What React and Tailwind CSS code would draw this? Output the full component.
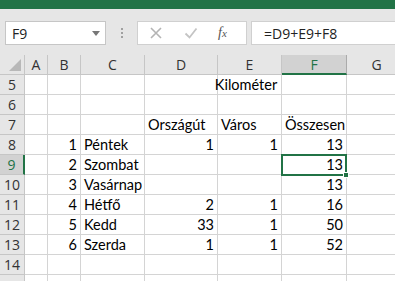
import React from "react";

const cols = [
  { name: "A", w: "w-[23px]" },
  { name: "B", w: "w-[33px]" },
  { name: "C", w: "w-[64px]" },
  { name: "D", w: "w-[73px]" },
  { name: "E", w: "w-[64px]" },
  { name: "F", w: "w-[65px]" },
  { name: "G", w: "w-[60px]" },
];

// each row: [A, B, C, D, E, F, G]; numbers are right aligned
const rows = [
  { n: 5, cells: ["", "", "", "", "", "", ""], title: true },
  { n: 6, cells: ["", "", "", "", "", "", ""] },
  { n: 7, cells: ["", "", "", "Országút", "Város", "Összesen", ""] },
  { n: 8, cells: ["", 1, "Péntek", 1, 1, 13, ""] },
  { n: 9, cells: ["", 2, "Szombat", "", "", 13, ""] },
  { n: 10, cells: ["", 3, "Vasárnap", "", "", 13, ""] },
  { n: 11, cells: ["", 4, "Hétfő", 2, 1, 16, ""] },
  { n: 12, cells: ["", 5, "Kedd", 33, 1, 50, ""] },
  { n: 13, cells: ["", 6, "Szerda", 1, 1, 52, ""] },
  { n: 14, cells: ["", "", "", "", "", "", ""] },
  { n: 15, cells: ["", "", "", "", "", "", ""], hidden: true },
];

const Cell = ({ w, value, selected }) => {
  const isNum = typeof value === "number";
  return (
    <div
      className={`relative ${w} h-[20px] shrink-0 border-r border-b border-[#d4d4d4] px-[3px] flex items-center whitespace-nowrap ${
        isNum ? "justify-end" : "justify-start"
      }`}
    >
      {/* text can spill into the next cell, like in Excel */}
      <span className={isNum ? "" : "absolute left-[3px]"}>{value}</span>
      {selected && (
        <div className="absolute -left-[1px] -top-[1px] w-[66px] h-[22px] border-2 border-[#217346] z-10">
          <div className="absolute -right-[4px] -bottom-[4px] w-[6px] h-[6px] bg-[#217346] border border-white"></div>
        </div>
      )}
    </div>
  );
};

export default function App() {
  return (
    <div className="w-[395px] h-[281px] overflow-hidden bg-white text-[#000] font-['Lato',sans-serif]">
      {/* ribbon edge */}
      <div className="h-[9px] bg-[#217346]"></div>

      {/* formula bar */}
      <div className="h-[46px] bg-[#e6e6e6] flex items-start pt-[12px] pl-[5px]">
        <div className="w-[101px] h-[24px] bg-white border border-[#c6c6c6] flex items-center justify-between pl-[6px] pr-[5px] text-[14px] text-[#222] font-['Open_Sans',sans-serif]">
          <span>F9</span>
          <span className="w-0 h-0 border-l-[4px] border-r-[4px] border-t-[5px] border-l-transparent border-r-transparent border-t-[#777]"></span>
        </div>
        <div className="w-[31px] h-[24px] flex flex-col items-center justify-center gap-[2px]">
          <span className="w-[2px] h-[2px] bg-[#a0a0a0]"></span>
          <span className="w-[2px] h-[2px] bg-[#a0a0a0]"></span>
          <span className="w-[2px] h-[2px] bg-[#a0a0a0]"></span>
        </div>
        <div className="w-[110px] h-[24px] bg-white border border-[#d0d0d0] flex items-center">
          <svg width="14" height="14" viewBox="0 0 14 14" className="ml-[11px]">
            <path d="M2 2 L12 12 M12 2 L2 12" stroke="#b4b4b4" strokeWidth="1.6" fill="none" />
          </svg>
          <svg width="14" height="14" viewBox="0 0 14 14" className="ml-[21px]">
            <path d="M1.5 7.5 L5.5 11.5 L12.5 2.5" stroke="#c4c4c4" strokeWidth="1.8" fill="none" />
          </svg>
          <span className="ml-[20px] text-[14px] italic text-[#555] font-['Liberation_Serif',serif] leading-none">
            f<span className="text-[11px]">x</span>
          </span>
        </div>
        <div className="flex-1 h-[24px] ml-[4px] bg-white border border-r-0 border-[#d0d0d0] flex items-center pl-[12px] text-[14px] text-[#222] font-['Open_Sans',sans-serif]">
          =D9+E9+F8
        </div>
      </div>

      {/* column headers */}
      <div className="flex h-[20px] bg-[#e6e6e6] text-[14px] text-[#333] font-['Open_Sans',sans-serif]">
        <div className="relative w-[25px] shrink-0 border-r border-b border-[#c6c6c6]">
          <svg width="12" height="12" viewBox="0 0 12 12" className="absolute right-[3px] bottom-[3px]">
            <path d="M12 0 L12 12 L0 12 Z" fill="#b8b8b8" />
          </svg>
        </div>
        {cols.map((c) => (
          <div
            key={c.name}
            className={`${c.w} shrink-0 flex items-center justify-center border-r ${
              c.name === "F"
                ? "bg-[#d2d2d2] border-b-2 border-b-[#217346] border-r-[#ababab] text-[#217346]"
                : "border-b border-[#c6c6c6]"
            }`}
          >
            {c.name}
          </div>
        ))}
      </div>

      {/* rows */}
      {rows.map((r) => (
        <div key={r.n} className="relative flex text-[14.5px]">
          <div
            className={`w-[25px] h-[20px] shrink-0 flex items-center justify-center text-[14px] font-['Open_Sans',sans-serif] border-b border-[#c6c6c6] ${
              r.n === 9
                ? "bg-[#d2d2d2] border-r-2 border-r-[#217346] text-[#217346]"
                : "bg-[#e6e6e6] border-r border-r-[#c6c6c6] text-[#333]"
            }`}
          >
            {r.hidden ? "" : r.n}
          </div>
          {cols.map((c, i) => (
            <Cell key={c.name} w={c.w} value={r.cells[i]} selected={r.n === 9 && c.name === "F"} />
          ))}
          {r.title && (
            <div className="absolute left-[145px] w-[202px] h-[20px] flex items-center justify-center">
              Kilométer
            </div>
          )}
        </div>
      ))}
    </div>
  );
}
